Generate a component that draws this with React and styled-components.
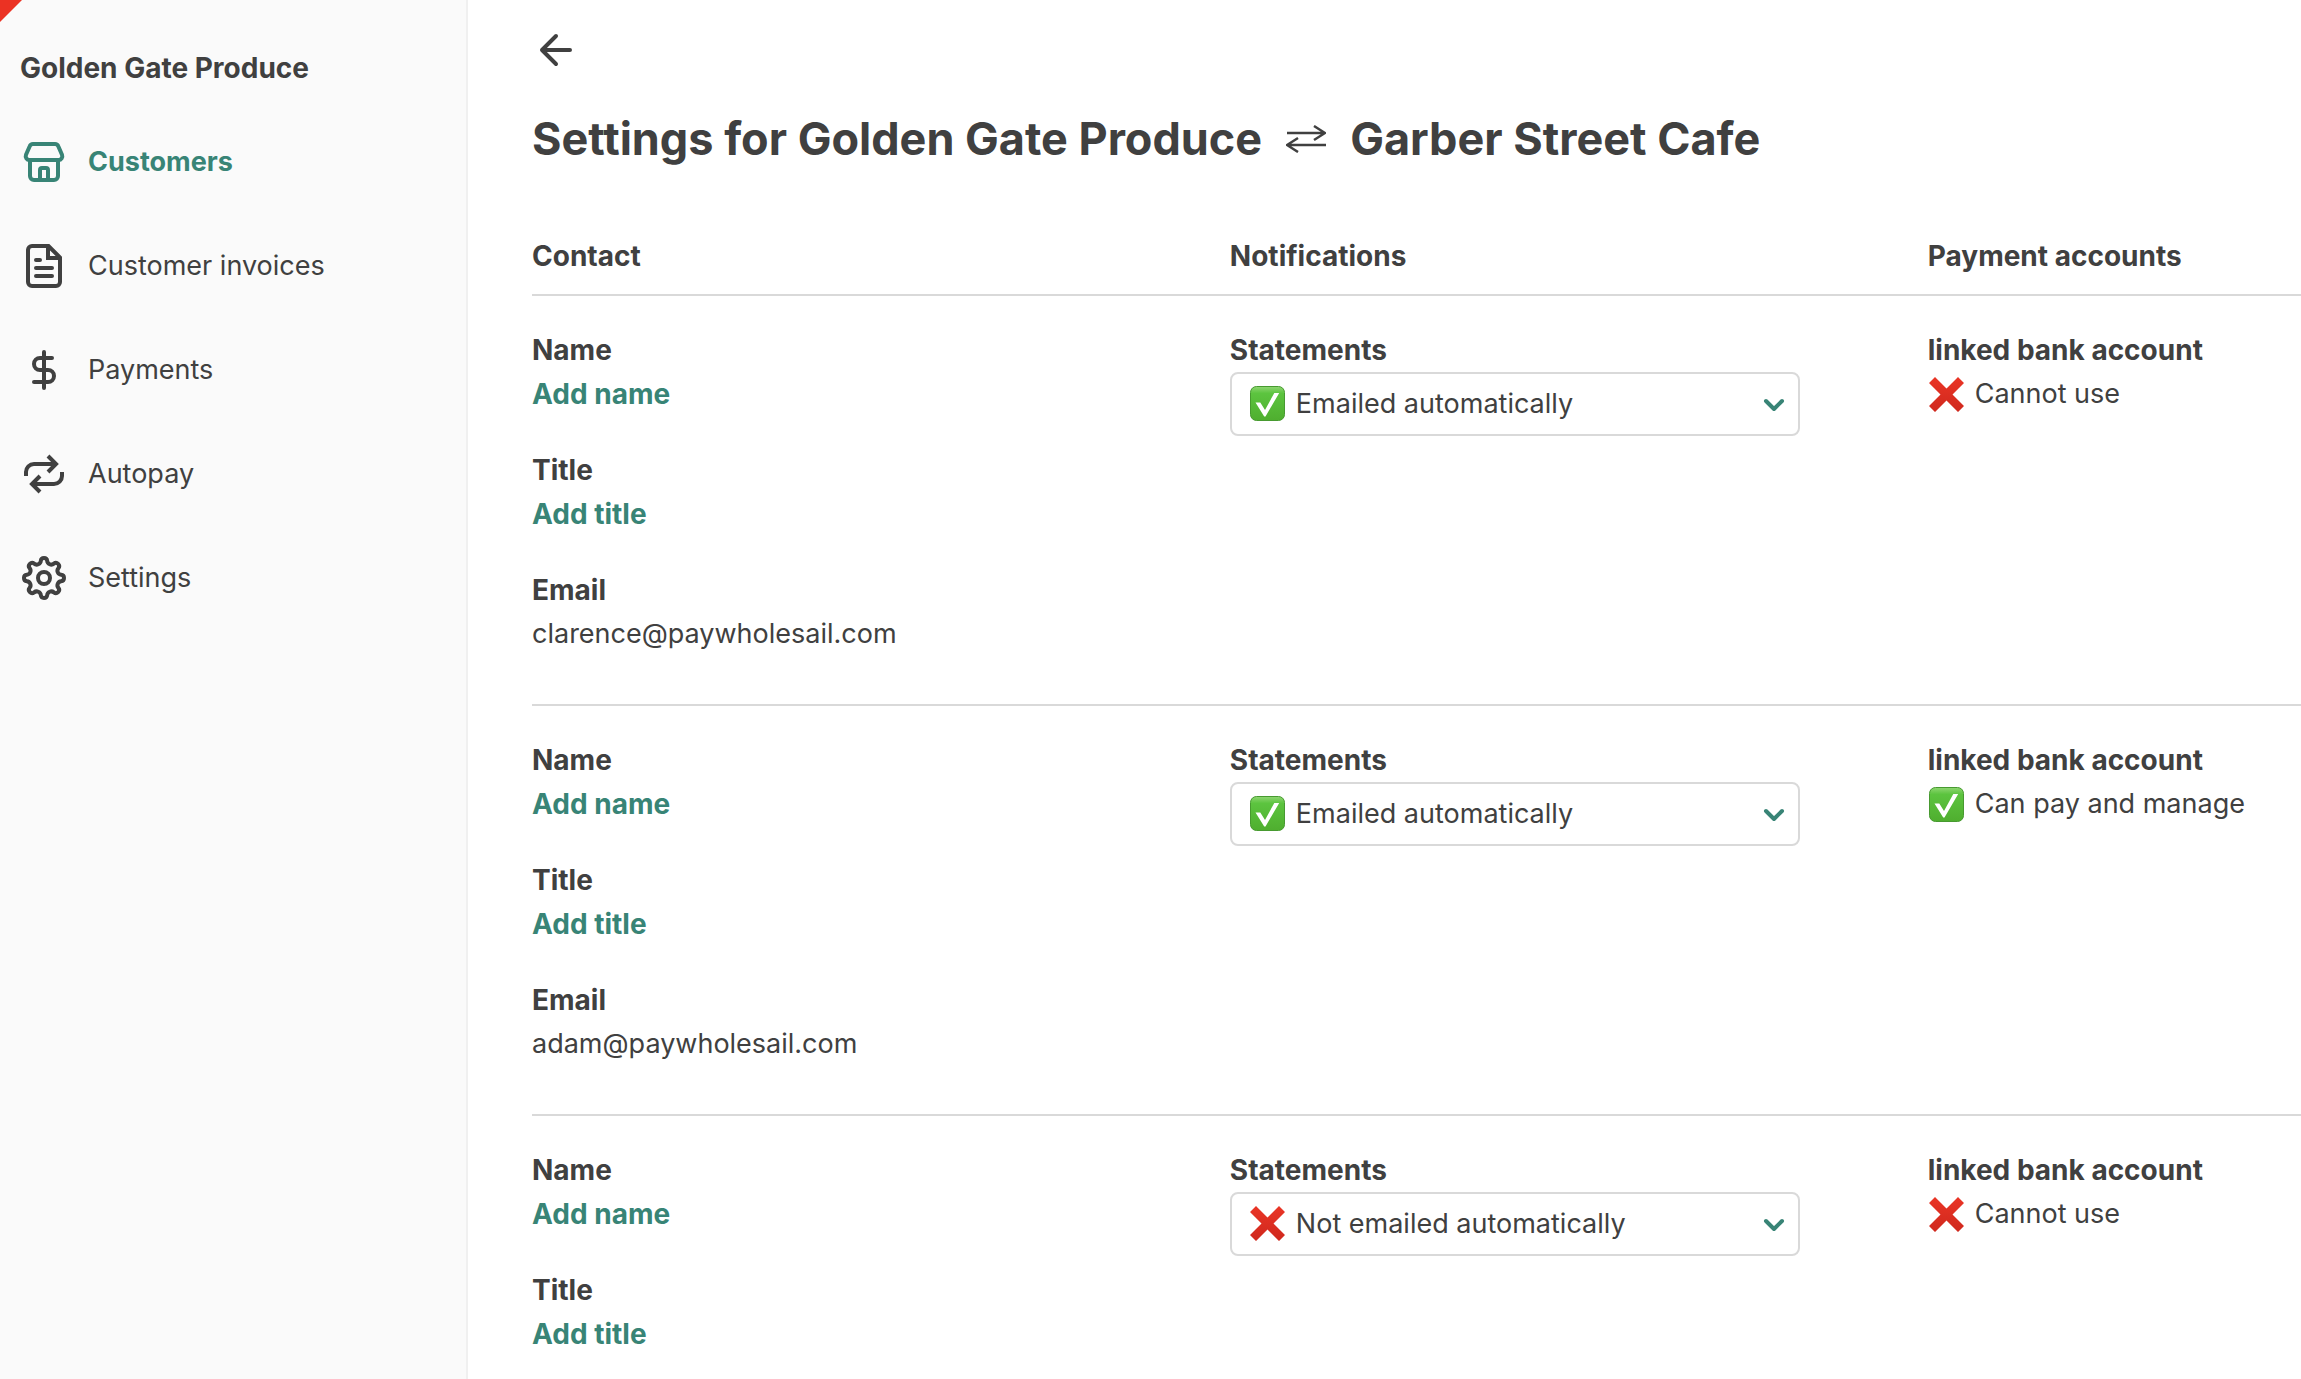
import { useState } from "react"
import styled, { createGlobalStyle } from "styled-components"

const GlobalStyle = createGlobalStyle`
    * {
        box-sizing: border-box;
    }
    body {
        margin: 0;
        background: #ffffff;
        color: #404040;
        font-family: Inter, "Liberation Sans", sans-serif;
        font-size: 27px;
        line-height: 44px;
    }
`

const Page = styled.div`
    display: flex;
    height: 100vh;
    overflow: hidden;
`

const Sidebar = styled.aside`
    position: relative;
    flex: 0 0 468px;
    padding-top: 46px;
    background: #fafafa;
    border-right: 2px solid #f0f0f0;
`

const Ribbon = styled.div`
    position: absolute;
    top: 0;
    left: 0;
    width: 22px;
    height: 22px;
    background: #eb3223;
    clip-path: polygon(0 0, 100% 0, 0 100%);
`

const Company = styled.div`
    padding: 0 20px;
    margin-bottom: 20px;
    font-size: 28px;
    font-weight: 700;
`

const NavLink = styled.a`
    display: flex;
    align-items: center;
    gap: 20px;
    height: 104px;
    padding: 0 20px;
    color: ${({ $active }) => ($active ? "#388476" : "#404040")};
    font-weight: ${({ $active }) => ($active ? 700 : 400)};
    text-decoration: none;
`

const NavIcon = styled.svg`
    flex: none;
    width: 48px;
    height: 48px;
    fill: none;
    stroke: currentColor;
    stroke-width: 4;
`

const Main = styled.main`
    flex: 1;
    min-width: 0;
    padding: 26px 0 0 64px;
`

const BackButton = styled.button`
    display: block;
    width: 48px;
    height: 48px;
    padding: 0;
    border: 0;
    background: none;
    color: inherit;
    cursor: pointer;

    svg {
        display: block;
        fill: none;
        stroke: currentColor;
        stroke-width: 4;
        stroke-linecap: round;
        stroke-linejoin: round;
    }
`

const Heading = styled.h1`
    display: flex;
    align-items: center;
    gap: 24px;
    margin: 32px 0 62px;
    font-size: 45px;
    font-weight: 650;
    line-height: 66px;
    white-space: nowrap;

    svg {
        flex: none;
        fill: none;
        stroke: currentColor;
        stroke-width: 2.5;
    }
`

const Table = styled.table`
    width: 100%;
    border-collapse: separate;
    border-spacing: 0;
    table-layout: fixed;
`

const HeadCell = styled.th`
    width: ${({ $width }) => $width || "auto"};
    padding: 0 0 16px;
    border-bottom: 2px solid #d9d9d9;
    font-size: 28px;
    font-weight: 700;
    text-align: left;
`

const Cell = styled.td`
    padding: ${({ $last }) => ($last ? "32px 0 48px" : "32px 128px 48px 0")};
    border-bottom: 2px solid #d9d9d9;
    vertical-align: top;
`

const Fields = styled.div`
    display: grid;
    gap: 32px;
`

const Label = styled.div`
    font-size: 28px;
    font-weight: 700;
`

const SelectLabel = styled.label`
    display: block;
    font-size: 28px;
    font-weight: 700;
`

const AddButton = styled.button`
    display: block;
    padding: 0;
    border: 0;
    background: none;
    color: #388476;
    font: inherit;
    font-size: 28px;
    font-weight: 700;
    cursor: pointer;
`

const Access = styled.div`
    display: flex;
    align-items: center;
    gap: 10px;
`

const SelectBox = styled.div`
    position: relative;
`

const Select = styled.select`
    display: block;
    width: 100%;
    height: 64px;
    padding: 0 56px 0 64px;
    appearance: none;
    border: 2px solid #d9d9d9;
    border-radius: 8px;
    background: #ffffff;
    color: inherit;
    font: inherit;
`

const SelectIcon = styled.span`
    position: absolute;
    top: 13px;
    left: 19px;
    pointer-events: none;
`

const SelectArrow = styled.svg`
    position: absolute;
    top: 25px;
    right: 14px;
    fill: none;
    stroke: #388476;
    stroke-width: 4;
    stroke-linecap: round;
    stroke-linejoin: round;
    pointer-events: none;
`

const StatusSvg = styled.svg`
    display: block;
    flex: none;
    width: 37px;
    height: 37px;
`

// eight round teeth joined by round valleys
function gearPath() {
    const tooth = 16.8
    const toothR = 3.2
    const valley = 19
    const at = (r, deg) => {
        const a = (deg * Math.PI) / 180
        return [24 + r * Math.sin(a), 24 - r * Math.cos(a)]
    }
    // point where a tooth circle touches the valley circle beside it
    const touch = (toothDeg, valleyDeg) => {
        const t = at(tooth, toothDeg)
        const v = at(valley, valleyDeg)
        const gap = Math.hypot(v[0] - t[0], v[1] - t[1])
        return [
            t[0] + ((v[0] - t[0]) * toothR) / gap,
            t[1] + ((v[1] - t[1]) * toothR) / gap,
        ]
    }
    let d = `M${touch(0, -22.5)}`
    for (let deg = 0; deg < 360; deg += 45) {
        d += `A${toothR} ${toothR} 0 0 1 ${touch(deg, deg + 22.5)}`
        d += `A4.1 4.1 0 0 0 ${touch(deg + 45, deg + 22.5)}`
    }
    return d + "Z"
}

const icons = {
    store: (
        <>
            <path d="M13 6h22a3.5 3.5 0 0 1 3.3 2.3l3.7 8.5c1 2.6-.8 5.2-3.4 5.2H9.400c-2.600 0-4.400-2.600-3.400-5.200L9.700 8.300A3.500 3.500 0 0 1 13 6Z" />
            <path d="M10 22v16a4 4 0 0 0 4 4h20a4 4 0 0 0 4-4V22" />
            <path d="M20 42V32a2 2 0 0 1 2-2h4a2 2 0 0 1 2 2v10" />
        </>
    ),
    invoice: (
        <>
            <path d="M28.5 4H12a4 4 0 0 0-4 4v32a4 4 0 0 0 4 4h24a4 4 0 0 0 4-4V15.5Z" />
            <path d="M28 4v12h12" />
            <path strokeLinecap="round" d="M16 18h4M16 26h16M16 34h16" />
        </>
    ),
    dollar: (
        <path strokeLinecap="round" d="M24 6v36M32 12H20a6 6 0 0 0 0 12h8a6 6 0 0 1 0 12H14" />
    ),
    repeat: (
        <>
            <path d="M6 26v-4a8 8 0 0 1 8-8h21M28 6l8 8-8 8" />
            <path d="M42 22v4a8 8 0 0 1-8 8H13M20 42l-8-8 8-8" />
        </>
    ),
    gear: (
        <>
            <circle cx="24" cy="24" r="6" />
            <path d={gearPath()} />
        </>
    ),
}

const links = [
    { name: "Customers", icon: "store", active: true },
    { name: "Customer invoices", icon: "invoice" },
    { name: "Payments", icon: "dollar" },
    { name: "Autopay", icon: "repeat" },
    { name: "Settings", icon: "gear" },
]

const contacts = [
    { email: "clarence@paywholesail.com", emailed: true, canPay: false },
    { email: "adam@paywholesail.com", emailed: true, canPay: true },
    { email: "", emailed: false, canPay: false },
]

function App() {
    return (
        <>
            <GlobalStyle />
            <Page>
                <Menu />
                <Main>
                    <BackButton aria-label="Back">
                        <svg width="48" height="48" viewBox="0 0 48 48">
                            <path d="M38 24H10M24 10L10 24l14 14" />
                        </svg>
                    </BackButton>
                    <Heading>
                        <span>Settings for Golden Gate Produce</span>
                        <svg width="40" height="28" viewBox="0 0 40 28">
                            <path d="M1 8h38M28 1l11 7-11 7M40 20H1M12 13L1 20l11 7" />
                        </svg>
                        <span>Garber Street Cafe</span>
                    </Heading>
                    <ContactTable contacts={contacts} />
                </Main>
            </Page>
        </>
    )
}

export default App

function Menu() {
    return (
        <Sidebar>
            <Ribbon />
            <Company>Golden Gate Produce</Company>
            <nav>
                {links.map((link) => (
                    <NavLink href="#" key={link.name} $active={link.active}>
                        <NavIcon viewBox="0 0 48 48">{icons[link.icon]}</NavIcon>
                        {link.name}
                    </NavLink>
                ))}
            </nav>
        </Sidebar>
    )
}

function ContactTable(props) {
    return (
        <Table>
            <thead>
                <tr>
                    <HeadCell $width="39.45%">Contact</HeadCell>
                    <HeadCell $width="39.45%">Notifications</HeadCell>
                    <HeadCell>Payment accounts</HeadCell>
                </tr>
            </thead>
            <tbody>
                {props.contacts.map((contact, index) => (
                    <tr key={index}>
                        <Cell>
                            <Fields>
                                <div>
                                    <Label>Name</Label>
                                    <AddButton>Add name</AddButton>
                                </div>
                                <div>
                                    <Label>Title</Label>
                                    <AddButton>Add title</AddButton>
                                </div>
                                {contact.email && (
                                    <div>
                                        <Label>Email</Label>
                                        <div>{contact.email}</div>
                                    </div>
                                )}
                            </Fields>
                        </Cell>
                        <Cell>
                            <Statements id={`statements-${index}`} emailed={contact.emailed} />
                        </Cell>
                        <Cell $last>
                            <Label>linked bank account</Label>
                            <Access>
                                <Status ok={contact.canPay} />
                                {contact.canPay ? "Can pay and manage" : "Cannot use"}
                            </Access>
                        </Cell>
                    </tr>
                ))}
            </tbody>
        </Table>
    )
}

function Statements(props) {
    const [value, setValue] = useState(props.emailed ? "yes" : "no")

    return (
        <>
            <SelectLabel htmlFor={props.id}>Statements</SelectLabel>
            <SelectBox>
                <Select id={props.id} value={value} onChange={(e) => setValue(e.target.value)}>
                    <option value="yes">Emailed automatically</option>
                    <option value="no">Not emailed automatically</option>
                </Select>
                <SelectIcon>
                    <Status ok={value === "yes"} />
                </SelectIcon>
                <SelectArrow width="24" height="16" viewBox="0 0 24 16">
                    <path d="M4 4l8 8 8-8" />
                </SelectArrow>
            </SelectBox>
        </>
    )
}

function Status(props) {
    if (props.ok) {
        return (
            <StatusSvg viewBox="0 0 37 37">
                <defs>
                    <linearGradient id="tick-green" x1="0" y1="0" x2="0" y2="1">
                        <stop offset="0" stopColor="#8fd672" />
                        <stop offset="0.2" stopColor="#5cc43f" />
                        <stop offset="1" stopColor="#4fae2f" />
                    </linearGradient>
                </defs>
                <rect x="1.5" y="1.5" width="34" height="34" rx="6" fill="url(#tick-green)" stroke="#479a30" />
                <path d="M6.5 17.5h4.8l4.7 7.5L25.3 8h4.9L16.5 31.5h-1.3Z" fill="#ffffff" />
            </StatusSvg>
        )
    }
    return (
        <StatusSvg viewBox="0 0 37 37">
            <defs>
                <linearGradient id="cross-red" x1="0" y1="0" x2="0" y2="1">
                    <stop offset="0" stopColor="#ea3526" />
                    <stop offset="1" stopColor="#cf281d" />
                </linearGradient>
            </defs>
            <path
                d="M7 1l11.5 11.5L30 1l6 6-11.5 11.5L36 30l-6 6-11.5-11.5L7 36l-6-6 11.5-11.5L1 7Z"
                fill="url(#cross-red)"
            />
        </StatusSvg>
    )
}
